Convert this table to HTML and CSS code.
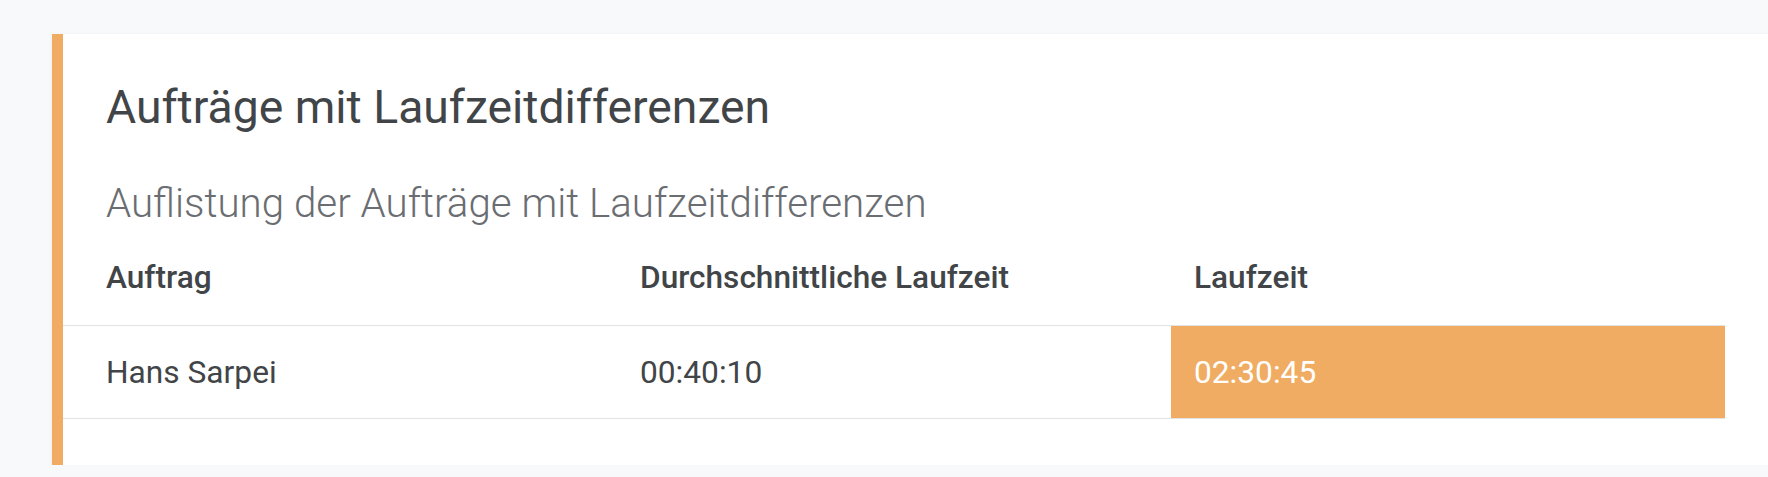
FILE: index.html
```html
<!DOCTYPE html>
<html lang="de">
<head>
  <meta charset="UTF-8" />
  <meta name="viewport" content="width=device-width, initial-scale=1.0"/>
  <title>Laufzeitdifferenzen</title>
  <link rel="stylesheet" href="styles.css">
</head>
<body>
  <section class="karte">
    <div class="karte-kopf">
      <h2>Aufträge mit Laufzeitdifferenzen</h2>
      <p>Auflistung der Aufträge mit Laufzeitdifferenzen</p>
    </div>

    <table class="auftraege">
      <thead>
        <tr>
          <th>Auftrag</th>
          <th>Durchschnittliche Laufzeit</th>
          <th>Laufzeit</th>
        </tr>
      </thead>
      <tbody>
        <tr>
          <td>Hans Sarpei</td>
          <td>00:40:10</td>
          <td class="warnung">02:30:45</td>
        </tr>
      </tbody>
    </table>
  </section>
</body>
</html>
```

FILE: styles.css
```css
:root {
  --orange: #f0ac62;
  --text: #414548;
  --text-hell: #6a6d71;
  --linie: #e3e3e3;
  --hintergrund: #f8f9fb;
}

* {
  margin: 0;
  padding: 0;
  box-sizing: border-box;
}

body {
  background-color: var(--hintergrund);
  color: var(--text);
  font-family: Roboto, 'Liberation Sans', sans-serif;
  overflow: hidden;
}

.karte {
  margin: 34px 0 0 52px;
  width: 1736px;
  background-color: #fff;
  border-left: 11px solid var(--orange);
  box-shadow: 0 1px 3px rgba(0, 0, 0, 0.08);
  padding-bottom: 46px;
}

.karte-kopf {
  padding: 46px 43px 0;
}

.karte-kopf h2 {
  font-size: 46.3px;
  font-weight: 400;
  line-height: 54px;
}

.karte-kopf p {
  margin-top: 48px;
  font-size: 40.3px;
  font-weight: 300;
  line-height: 44px;
  color: var(--text-hell);
}

.auftraege {
  width: 1662px;
  table-layout: fixed;
  border-collapse: collapse;
}

.auftraege th,
.auftraege td {
  text-align: left;
  padding-left: 23px;
  padding-right: 23px;
}

.auftraege th:first-child,
.auftraege td:first-child {
  padding-left: 43px;
}

.auftraege th {
  font-size: 31.6px;
  font-weight: 500;
  line-height: 32px;
  padding-top: 36px;
  padding-bottom: 31px;
  border-bottom: 1px solid var(--linie);
}

.auftraege td {
  font-size: 31.7px;
  line-height: 36px;
  padding-top: 29px;
  padding-bottom: 27px;
  border-bottom: 1px solid var(--linie);
}

.auftraege td.warnung {
  background-color: var(--orange);
  color: #fff;
}
```
